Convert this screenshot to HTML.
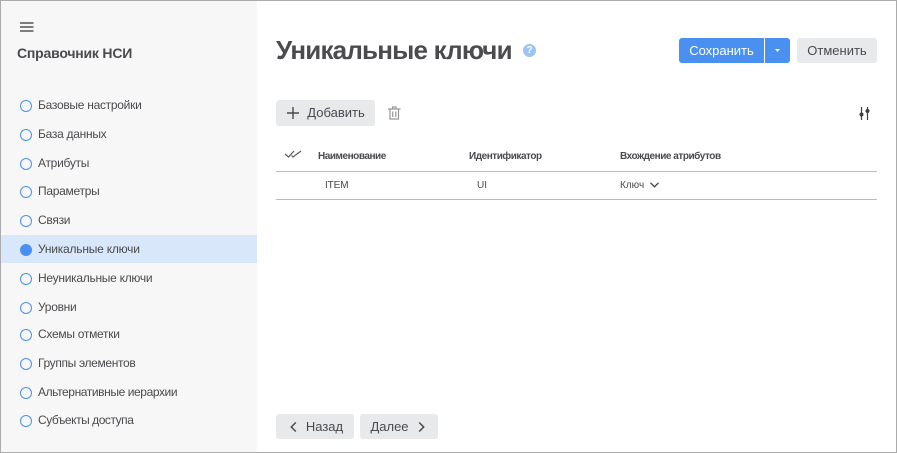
<!DOCTYPE html>
<html lang="ru"><head><meta charset="utf-8"><style>
*{box-sizing:border-box}
html,body{margin:0;padding:0;background:#fff}
body{width:897px;height:453px;position:relative;overflow:hidden;font-family:"Liberation Sans",sans-serif;color:#4a4a4f}
.a{position:absolute;white-space:nowrap}
.frame{left:0;top:0;width:897px;height:453px;border:1px solid #ababab;z-index:9}
.side{left:1px;top:1px;width:256px;height:451px;background:#f7f7f7}
.act{left:1px;top:235px;width:256px;height:28px;background:#d9e7fa}
.dot{position:absolute;left:20px;width:12px;height:12px;border:1.3px solid #4a90f0;border-radius:50%}
.dot.on{background:#4a90f0}
.it{position:absolute;left:38px;font-size:12px;line-height:16px;white-space:nowrap;letter-spacing:-.28px}
.btn{position:absolute;background:#e8e9eb;border-radius:3px;font-size:13px;line-height:25px;text-align:center;white-space:nowrap}
.th{position:absolute;top:151px;font-size:10px;line-height:12px;font-weight:bold;white-space:nowrap;letter-spacing:-.46px}
.td{position:absolute;top:180px;font-size:10px;line-height:12px;white-space:nowrap}
.hr{position:absolute;left:276px;width:601px;height:1px;background:#bcbcbc}
svg{position:absolute;overflow:visible}
</style></head><body>
<div class="a side"></div>
<div class="a act"></div>
<svg style="left:20px;top:22px" width="14" height="10" viewBox="0 0 14 10"><path d="M0 1h13.500M0 5h13.500M0 9h13.500" stroke="#555" stroke-width="1.500" fill="none"/></svg>
<div class="a" style="left:17px;top:45px;font-size:14px;line-height:17px;font-weight:bold;letter-spacing:-.2px">Справочник НСИ</div>

<div class="dot" style="top:100px"></div><div class="it" style="top:97px">Базовые настройки</div>
<div class="dot" style="top:129px"></div><div class="it" style="top:126px">База данных</div>
<div class="dot" style="top:158px"></div><div class="it" style="top:155px">Атрибуты</div>
<div class="dot" style="top:186px"></div><div class="it" style="top:183px">Параметры</div>
<div class="dot" style="top:215px"></div><div class="it" style="top:212px">Связи</div>
<div class="dot on" style="top:244px"></div><div class="it" style="top:241px;letter-spacing:-.22px">Уникальные ключи</div>
<div class="dot" style="top:273px"></div><div class="it" style="top:270px">Неуникальные ключи</div>
<div class="dot" style="top:302px"></div><div class="it" style="top:299px">Уровни</div>
<div class="dot" style="top:329px"></div><div class="it" style="top:326px">Схемы отметки</div>
<div class="dot" style="top:358px"></div><div class="it" style="top:355px;letter-spacing:-.34px">Группы элементов</div>
<div class="dot" style="top:387px"></div><div class="it" style="top:384px;letter-spacing:-.41px">Альтернативные иерархии</div>
<div class="dot" style="top:415px"></div><div class="it" style="top:412px;letter-spacing:-.46px">Субъекты доступа</div>

<div class="a" style="left:276px;top:34px;font-size:26px;line-height:32px;font-weight:bold;letter-spacing:-.8px">Уникальные ключи</div>
<div class="a" style="left:523px;top:44px;width:13px;height:13px;border-radius:50%;background:#9cc4f5;color:#fff;font-size:10px;line-height:13px;font-weight:bold;text-align:center">?</div>

<div class="btn" style="left:679px;top:38px;width:85px;height:25px;background:#4a90f0;color:#fff;border-radius:3px 0 0 3px">Сохранить</div>
<div class="btn" style="left:765px;top:38px;width:25px;height:25px;background:#4a90f0;border-radius:0 3px 3px 0"></div>
<svg style="left:775px;top:49px" width="5" height="3" viewBox="0 0 5 3"><path d="M0 0h5L2.500 3z" fill="#fff"/></svg>
<div class="btn" style="left:797px;top:38px;width:80px;height:25px">Отменить</div>

<div class="btn" style="left:276px;top:100px;width:99px;height:26px;line-height:26px;padding-left:21px">Добавить</div>
<svg style="left:287px;top:107px" width="12" height="12" viewBox="0 0 12 12"><path d="M6 0v12M0 6h12" stroke="#4a4a4f" stroke-width="1.400" fill="none"/></svg>
<svg style="left:388px;top:106px" width="13" height="14" viewBox="0 0 13 14"><path d="M0 3h12.500M4.500 3V1h3.500v2M2 3v10h8.500V3M4.700 5.500v5.500M7.800 5.500v5.500" stroke="#97979b" stroke-width="1.200" fill="none"/></svg>

<svg style="left:859px;top:107px" width="12" height="13" viewBox="0 0 12 13"><path d="M2.500 0v13M8.500 0v13" stroke="#3f3f43" stroke-width="1.200" fill="none"/><circle cx="2.500" cy="7.500" r="2" fill="#3f3f43"/><circle cx="8.500" cy="4" r="2" fill="#3f3f43"/></svg>

<svg style="left:285px;top:150px" width="17" height="8" viewBox="0 0 17 8"><path d="M0 4l3.500 3L9 1M6.500 5.500L8 7l8-6" stroke="#5a5a5e" stroke-width="1.200" fill="none"/></svg>
<div class="th" style="left:318px">Наименование</div>
<div class="th" style="left:469px">Идентификатор</div>
<div class="th" style="left:620px">Вхождение атрибутов</div>
<div class="hr" style="top:171px"></div>
<div class="td" style="left:325px;letter-spacing:-.1px">ITEM</div>
<div class="td" style="left:477px">UI</div>
<div class="td" style="left:620px">Ключ</div>
<svg style="left:650px;top:182px" width="9" height="6" viewBox="0 0 9 6"><path d="M.5.800L4.500 4.800 8.500.800" stroke="#3f3f43" stroke-width="1.300" fill="none"/></svg>
<div class="hr" style="top:199px"></div>

<div class="btn" style="left:276px;top:414px;width:78px;height:25px;padding-left:19px">Назад</div>
<svg style="left:290px;top:422px" width="7" height="10" viewBox="0 0 7 10"><path d="M5.800.500L1.300 5l4.500 4.500" stroke="#4a4a4f" stroke-width="1.500" fill="none"/></svg>
<div class="btn" style="left:360px;top:414px;width:78px;height:25px;padding-right:19px">Далее</div>
<svg style="left:418px;top:422px" width="7" height="10" viewBox="0 0 7 10"><path d="M1.200.500L5.700 5 1.200 9.500" stroke="#4a4a4f" stroke-width="1.500" fill="none"/></svg>
<div class="a frame"></div>
</body></html>
